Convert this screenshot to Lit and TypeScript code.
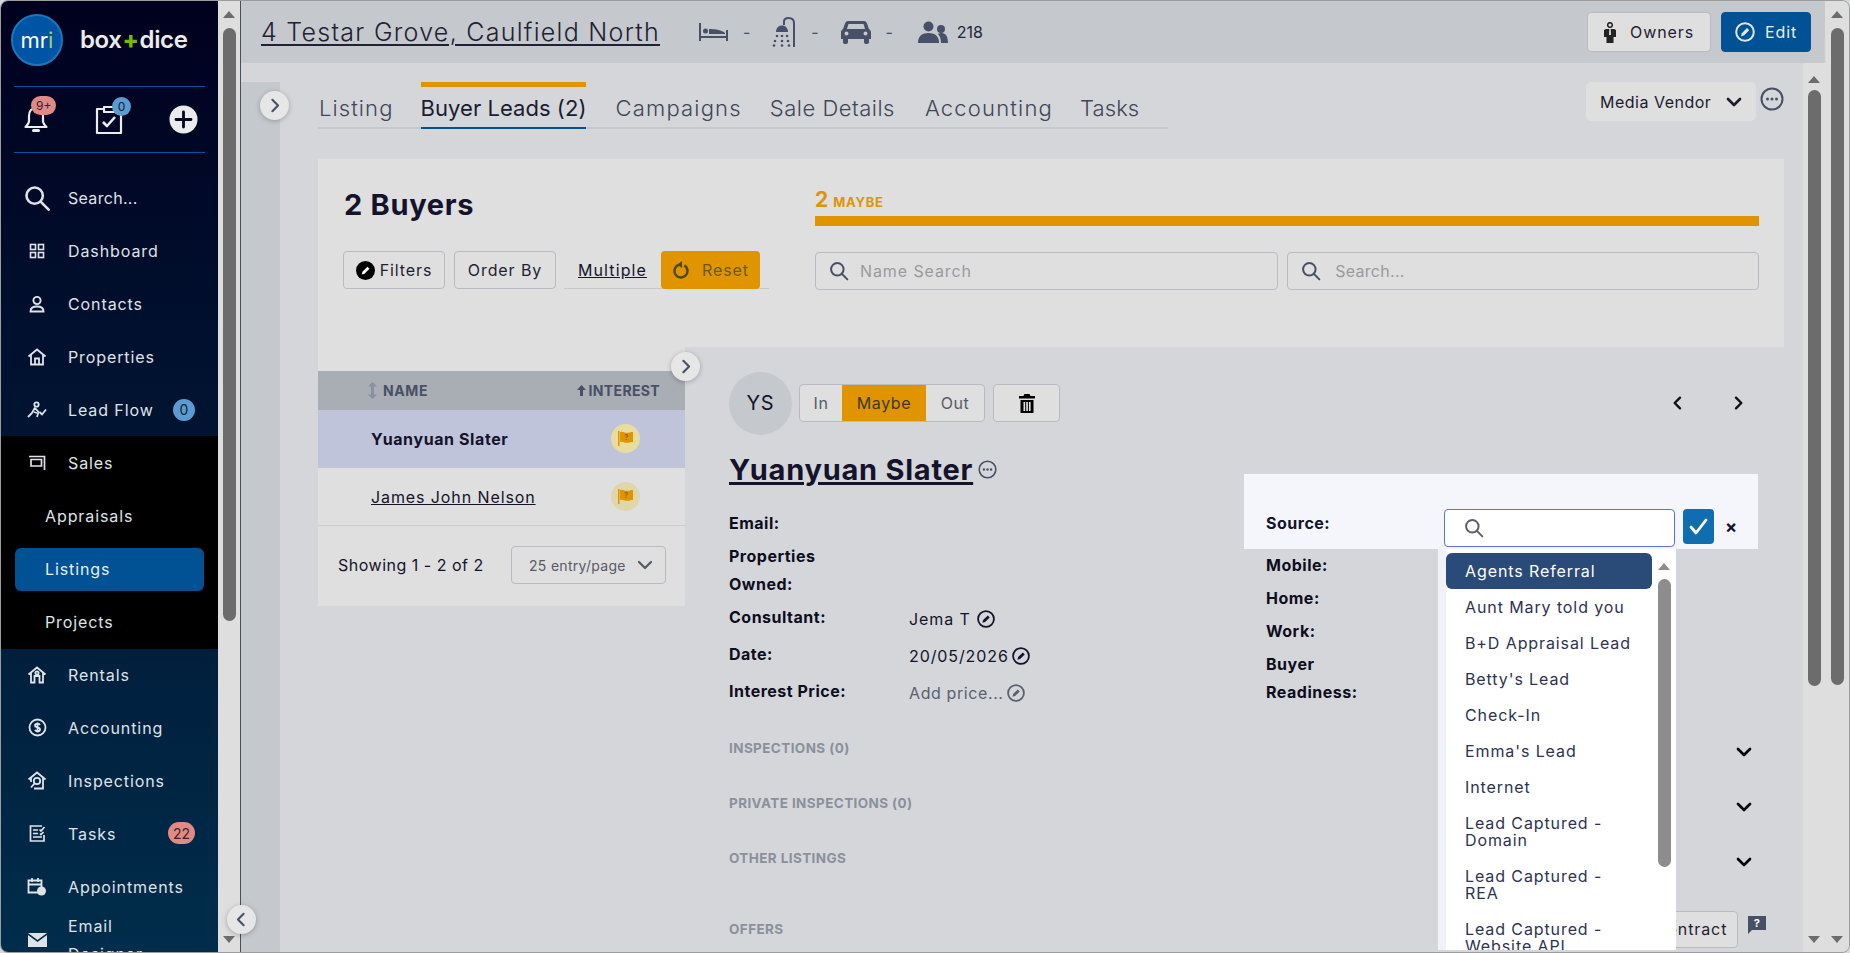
import { LitElement, html, css } from "lit";
import { customElement } from "lit/decorators.js";

const ICONS: Record<string, () => unknown> = {
  search: () => html`<svg width="28" height="28" viewBox="0 0 24 24" fill="none" stroke="currentColor" stroke-width="2.2" stroke-linecap="round"><circle cx="10" cy="10" r="7"/><path d="M15.5 15.5 22 22"/></svg>`,
  dashboard: () => html`<svg width="16" height="16" viewBox="0 0 16 16" fill="none" stroke="currentColor" stroke-width="1.6"><rect x="1.5" y="1.5" width="5" height="5"/><rect x="9.5" y="1.5" width="5" height="5"/><rect x="1.5" y="9.5" width="5" height="5"/><rect x="9.5" y="9.5" width="5" height="5"/></svg>`,
  contacts: () => html`<svg width="18" height="18" viewBox="0 0 18 18" fill="none" stroke="currentColor" stroke-width="1.9"><circle cx="9" cy="5.5" r="3.6"/><path d="M2.5 16.5c0-3.5 2.5-5 6.5-5s6.5 1.5 6.5 5z"/></svg>`,
  properties: () => html`<svg width="20" height="18" viewBox="0 0 20 18" fill="none" stroke="currentColor" stroke-width="1.8"><path d="M1.5 8.5 10 1.5l8.5 7M4 7v9.5h12V7M8 16.5v-6h4v6"/></svg>`,
  leadflow: () => html`<svg width="20" height="18" viewBox="0 0 20 18" fill="none" stroke="currentColor" stroke-width="1.8"><circle cx="9.5" cy="3.5" r="2.2"/><path d="M8 6.500 5 12l-4 4M8 7l3.500 4-1.500 5M7 11l3 1"/><path d="m12.500 11 2.500 2.500 4-5"/></svg>`,
  sales: () => html`<svg width="18" height="16" viewBox="0 0 18 16" fill="none" stroke="currentColor" stroke-width="1.7"><path d="M1 1.500h15.500V15"/><path d="M3 4.500h10.500V11H3z"/></svg>`,
  rentals: () => html`<svg width="20" height="18" viewBox="0 0 20 18" fill="none" stroke="currentColor" stroke-width="1.8"><path d="M1.500 8.500 10 1.500l8.500 7M4 7v9.500h3.500V10h5v6.500H16V7"/><circle cx="10" cy="7" r="1.6"/></svg>`,
  accounting: () => html`<svg width="19" height="19" viewBox="0 0 19 19" fill="none" stroke="currentColor" stroke-width="1.8"><circle cx="9.5" cy="9.5" r="8"/><path d="M12 7c-.5-1-1.500-1.400-2.500-1.400-1.400 0-2.500.8-2.500 1.900 0 2.600 5 1.300 5 3.900 0 1.100-1.100 1.900-2.500 1.900-1 0-2-.4-2.500-1.400M9.500 4.500v10"/></svg>`,
  inspections: () => html`<svg width="20" height="19" viewBox="0 0 20 19" fill="none" stroke="currentColor" stroke-width="1.8"><path d="M1.500 8.500 10 1.500l8.500 7M4 7v4M16 7v10.500H7"/><circle cx="10" cy="10" r="3.2"/><path d="m7.500 12.500-3.500 4"/></svg>`,
  tasks: () => html`<svg width="17" height="17" viewBox="0 0 17 17" fill="none" stroke="currentColor" stroke-width="1.7"><path d="M15 10v6H1.500V1H13M4 5h5M4 8.500h5M4 12h9"/><path d="m10.500 4.500 1.500 1.500 3.500-4M11 8.500l1 1 2.500-2.500"/></svg>`,
  appointments: () => html`<svg width="20" height="19" viewBox="0 0 20 19"><g fill="none" stroke="currentColor" stroke-width="1.8"><path d="M1.500 3.500h13v12h-13zM1.500 7.500h13M5 1v4M11 1v4"/></g><circle cx="14.500" cy="14" r="4.500" fill="currentColor"/></svg>`,
  mail: () => html`<svg width="19" height="14" viewBox="0 0 19 14"><path d="M0 0h19L9.500 7z M0 2v12h19V2l-9.500 7z" fill="currentColor"/></svg>`,
  bell: () => html`<svg width="26" height="29" viewBox="0 0 26 29" fill="none" stroke="currentColor" stroke-width="2.2" stroke-linejoin="round"><path d="M13 3c-4.500 0-7 3.500-7 8v5c0 2.500-1.500 4-3.500 6h21c-2-2-3.500-3.500-3.500-6v-5c0-4.500-2.500-8-7-8z"/><path d="M10.500 25.500h5" stroke-width="3" stroke-linecap="round"/></svg>`,
  clipboard: () => html`<svg width="28" height="30" viewBox="0 0 28 30" fill="none" stroke="currentColor" stroke-width="2.2" stroke-linejoin="round"><path d="M9 4H2v24h24V4h-7"/><path d="M9 2h10v5H9z"/><path d="m8 17 4 4 8-9" stroke-width="2.6"/></svg>`,
  plus: () => html`<svg width="29" height="29" viewBox="0 0 29 29"><circle cx="14.500" cy="14.500" r="14" fill="#ebebeb"/><path d="M14.500 7v15M7 14.500h15" stroke="#000020" stroke-width="2.8" stroke-linecap="round"/></svg>`,
  bed: () => html`<svg width="29" height="20" viewBox="0 0 29 20" fill="none" stroke="#475066" stroke-width="2"><path d="M1 1v18M28 8v11M1 15h27"/><circle cx="6.500" cy="9" r="2.500" fill="#475066" stroke="none"/><path d="M10 12V7c5 0 12 .5 16 4v1z" fill="#475066" stroke="none"/></svg>`,
  shower: () => html`<svg width="24" height="30" viewBox="0 0 24 30"><path d="M12 8V4.500C12 2 14 1 16.500 1 20 1 22 3 22 6v24" fill="none" stroke="#475066" stroke-width="2"/><path d="M4 15h12c0-4-2.500-6.500-6-6.500S4 11 4 15z" fill="#475066"/><g fill="#475066"><circle cx="5" cy="19" r="1.3"/><circle cx="10" cy="19" r="1.3"/><circle cx="15" cy="19" r="1.3"/><circle cx="3" cy="24" r="1.3"/><circle cx="10" cy="24" r="1.3"/><circle cx="16" cy="24" r="1.3"/><circle cx="2" cy="28.500" r="1.3"/><circle cx="10" cy="28.500" r="1.3"/><circle cx="17" cy="28.500" r="1.3"/></g></svg>`,
  car: () => html`<svg width="30" height="24" viewBox="0 0 30 24"><path fill-rule="evenodd" fill="#475066" d="M7 1h16c1.500 0 2.500 1 3 2.500L28 9c1.300.8 2 2 2 3.500V19h-2v3c0 1-.8 2-2 2h-1c-1.200 0-2-1-2-2v-3H7v3c0 1-.8 2-2 2H4c-1.200 0-2-1-2-2v-3H0v-6.500C0 11 .7 9.800 2 9l2-5.500C4.500 2 5.500 1 7 1zm.5 3L6 9h18l-1.500-5zM5.500 11.500a2 2 0 1 0 0 4 2 2 0 0 0 0-4zm19 0a2 2 0 1 0 0 4 2 2 0 0 0 0-4z"/></svg>`,
  people: () => html`<svg class="people" width="30" height="22" viewBox="0 0 30 22" fill="#475066"><circle cx="10.500" cy="5.500" r="5"/><path d="M0 22c0-6 3-10 10.500-10S21 16 21 22z"/><circle cx="23" cy="8" r="4"/><path d="M20 13c1-.6 2-1 3.500-1 4.500 0 6.500 4 6.500 10h-7c0-4-1-7-3-9z"/></svg>`,
  owner: () => html`<svg width="12" height="21" viewBox="0 0 12 21" fill="#222"><circle cx="6" cy="3" r="2.3" fill="none" stroke="#222" stroke-width="1.5"/><path d="M2 7h8l2 1v7H9.500v6h-7v-6H0V8z"/><path d="M5.300 7h1.400l.3 6H5z" fill="#ddd"/></svg>`,
  trash: () => html`<svg width="16" height="19" viewBox="0 0 16 19" fill="#000"><path d="M5.500 0h5l1 2H16v2.500H0V2h4.500z"/><path fill-rule="evenodd" d="M1.500 6h13v13h-13zM4.500 8v9h1.700V8zM7.200 8v9h1.700V8zM9.900 8v9h1.700V8z"/></svg>`,
  check: () => html`<svg width="19" height="17" viewBox="0 0 19 17" fill="none" stroke="#fff" stroke-width="2.8" stroke-linecap="round" stroke-linejoin="round"><path d="m2 9 5 6L17 2"/></svg>`,
  help: () => html`<svg width="18" height="18" viewBox="0 0 18 18"><path d="M0 0h18v14H4l-4 4z" fill="#475066"/><text x="9" y="11" font-size="11" font-weight="700" text-anchor="middle" fill="#fff" font-family="Inter, sans-serif">?</text></svg>`,
  reset: () => html`<svg width="18" height="19" viewBox="0 0 18 19" fill="none" stroke="#4f4a1c" stroke-width="2.4"><path d="M12.250 5.370A6.500 6.500 0 1 1 7.870 4.600"/><path d="M10 1v7L5.500 4.500z" fill="#4f4a1c" stroke="none"/></svg>`,
};

const chevron = (dir: "up" | "down" | "left" | "right", size = 16, w = 2.4) => {
  const d = { down: "M4 8l8 8 8-8", up: "M4 16l8-8 8 8", left: "M15 4l-8 8 8 8", right: "M9 4l8 8-8 8" }[dir];
  return html`<svg width=${size} height=${size} viewBox="0 0 24 24" fill="none" stroke="currentColor" stroke-width=${w * 1.5} stroke-linecap="round" stroke-linejoin="round"><path d=${d}/></svg>`;
};

// circle with a pencil; filled variant is the black Filters one
const pencil = (size = 18, color = "currentColor", filled = false) => html`<svg width=${size} height=${size} viewBox="0 0 20 20">
  <circle cx="10" cy="10" r=${filled ? 10 : 8.8} fill=${filled ? color : "none"} stroke=${color} stroke-width=${filled ? 0 : 2}/>
  <path d="M6 14.200l.8-3 5.200-5.200 2.200 2.200-5.200 5.200z" fill=${filled ? "#fff" : color}/>
</svg>`;

const dots = (size = 24) => html`<svg width=${size} height=${size} viewBox="0 0 24 24" fill="none" stroke="#475066" stroke-width="2"><circle cx="12" cy="12" r="10.500"/><circle cx="7.500" cy="12" r="1.500" fill="#475066" stroke="none"/><circle cx="12" cy="12" r="1.500" fill="#475066" stroke="none"/><circle cx="16.500" cy="12" r="1.500" fill="#475066" stroke="none"/></svg>`;

const lens = (size = 20, color = "#475066") => html`<svg width=${size} height=${size} viewBox="0 0 24 24" fill="none" stroke=${color} stroke-width="2.4" stroke-linecap="round"><circle cx="10" cy="10" r="7.500"/><path d="M15.500 15.500 22 22"/></svg>`;

const flag = () => html`<span class="flag"><svg width="15" height="15" viewBox="0 0 15 15"><path d="M0 0h1.500v15H0z" fill="#e09400"/><path d="M2 1c3-1 4 .8 6.500.8S12.500 1 15 1v10c-2.500 0-3.500.8-6.500.8S5 10 2 11z" fill="#e09400"/><text x="8.500" y="8.500" font-size="7" font-weight="700" text-anchor="middle" fill="#8a6a10" font-family="Inter, sans-serif">?</text></svg></span>`;

const TOP_NAV = [
  ["dashboard", "Dashboard"],
  ["contacts", "Contacts"],
  ["properties", "Properties"],
];
const LOWER_NAV = [
  ["rentals", "Rentals"],
  ["accounting", "Accounting"],
  ["inspections", "Inspections"],
];
const SOURCES = ["Aunt Mary told you", "B+D Appraisal Lead", "Betty's Lead", "Check-In", "Emma's Lead", "Internet", "Lead Captured - Domain", "Lead Captured - REA", "Lead Captured - Website API"];

@customElement("app-root")
export class AppRoot extends LitElement {
  static styles = css`
    :host {
      display: block;
      width: 1850px;
      height: 953px;
      overflow: hidden;
      font-family: Inter, "Liberation Sans", sans-serif;
      font-size: 16px;
      letter-spacing: 0.9px;
      color: #14132b;
      background: #d5d6da;
    }
    * { box-sizing: border-box; }
    svg { display: block; flex: none; }
    a { color: inherit; }
    .window {
      display: flex;
      height: 953px;
      border: 1px solid #9c9c9c;
      border-radius: 8px;
      overflow: hidden;
      position: relative;
    }

    /* sidebar */
    .sidebar {
      width: 217px;
      flex: none;
      background: linear-gradient(#00001e, #002d4b);
      color: #dfe3e8;
      overflow: hidden;
    }
    .logo { display: flex; align-items: center; height: 85px; padding: 0 0 8px 10px; }
    .mri {
      width: 52px; height: 52px; border-radius: 50%;
      background: #0054a6; border: 2px solid #1a78b8;
      color: #fff; display: flex; align-items: center; justify-content: center;
      font-size: 22px; font-weight: 400; letter-spacing: 0;
    }
    .mri b { font-weight: 400; color: #a8d05a; }
    .brand { margin-left: 17px; color: #ececec; font-size: 24px; font-weight: 600; letter-spacing: -0.4px; }
    .brand i { font-style: normal; color: #7ab800; font-weight: 800; padding: 0 1px; }
    .quick {
      margin: 0 13px; height: 67px;
      border-top: 1px solid #0054a6; border-bottom: 1px solid #0054a6;
      position: relative; display: flex; align-items: center; justify-content: space-between;
      padding: 0 0 0 9px; color: #ececec;
    }
    .quick-item { position: relative; }
    .quick-item.add { margin-right: 7px; }
    .pill {
      position: absolute; left: 8px; top: -9px; font-size: 12px; color: #3c2030; letter-spacing: 0;
      background: #e08a85; border-radius: 10px; height: 19px; min-width: 19px; padding: 0 5px;
      display: flex; align-items: center; justify-content: center;
    }
    .pill.blue { left: 17px; top: -8px; background: #5a9bd4; color: #123; padding: 0; }
    .nav { padding-top: 19px; }
    .item {
      height: 52.9px; display: flex; align-items: center; padding-left: 14px;
      position: relative; color: #dfe3e8;
    }
    .item.find { letter-spacing: 0.3px; }
    .ico { width: 44px; flex: none; display: flex; justify-content: center; margin-right: 9px; }
    .item .count {
      position: absolute; right: 23px; top: 15px; height: 22px; min-width: 22px;
      border-radius: 11px; display: flex; align-items: center; justify-content: center;
      font-size: 14px; letter-spacing: 0; color: #123; background: #5a9bd4; padding: 0 5px;
    }
    .item .count.red { background: #e08a85; color: #402030; right: 23px; }
    .sales { background: #000; padding-top: 0.5px; }
    .sub { padding-left: 44px; }
    .sub.on {
      height: 43px; margin: 5px 14px; padding-left: 30px;
      background: #005295; border-radius: 6px; color: #e8eef4;
    }
    .two { line-height: 28px; }

    /* scrollbars */
    .scroll {
      flex: none; width: 22px; background: #dedede; position: relative;
      display: flex; flex-direction: column; align-items: center;
    }
    .arrow { width: 0; height: 0; border-left: 6px solid transparent; border-right: 6px solid transparent; }
    .arrow.up { border-bottom: 7px solid #6c6c6c; margin-top: 10px; }
    .arrow.down { border-top: 7px solid #6c6c6c; position: absolute; bottom: 9px; }
    .thumb { width: 13px; background: #6c6c6c; border-radius: 7px; margin-top: 10px; }
    .thumb.a { height: 593px; }
    .thumb.b { height: 596px; margin-top: 7px; }
    .thumb.c { height: 657px; }
    .arrow.inner { margin-top: 13px; }
    .scroll.outer { width: 24px; }

    .divider { width: 1px; background: #46505e; flex: none; }

    /* main */
    .main { flex: 1; min-width: 0; display: flex; flex-direction: column; }
    .head {
      height: 62px; flex: none; background: #c5c8cd;
      display: flex; align-items: center; padding: 0 14px 0 20px;
    }
    .title { font-size: 25px; font-weight: 300; letter-spacing: 1.27px; color: #1f2233; text-decoration: underline; text-decoration-thickness: 2px; text-underline-offset: 3px; }
    .specs { display: flex; align-items: center; margin-left: 39px; color: #475066; }
    .dash { margin: 0 21px 0 15px; }
    .people { margin-left: 3px; }
    .nbr { font-size: 16px; margin-left: 9px; letter-spacing: 0; color: #22263a; }
    .spacer { flex: 1; }
    .btn {
      height: 40px; display: inline-flex; align-items: center; justify-content: center;
      background: #dfdfdf; border: 1px solid #b9bbc0; border-radius: 4px; color: #1f2233;
    }
    .owners { width: 124px; gap: 14px; }
    .edit { width: 90px; margin-left: 10px; background: #005295; border-color: #005295; color: #e8eef4; gap: 10px; }
    .body { flex: 1; display: flex; min-height: 0; }
    .strip { width: 39px; flex: none; margin-top: 19px; background: #c5c8cd; }
    .page { flex: 1; min-width: 0; padding: 19px 19px 0 38px; }
    .tabs-row { display: flex; height: 46px; margin-bottom: 31px; }
    .tabs { display: flex; width: 850px; height: 47px; border-bottom: 2px solid #c5c8cd; padding-left: 1px; gap: 27px; }
    .tab { font-size: 22px; font-weight: 300; letter-spacing: 0.8px; color: #3f4658; height: 47px; padding-top: 13px; }
    .tab:nth-child(1) { letter-spacing: 1.1px; }
    .tab:nth-child(3) { letter-spacing: 1.2px; margin-left: 2px; }
    .tab:nth-child(4) { letter-spacing: 0.5px; margin-left: 1px; }
    .tab:nth-child(5) { letter-spacing: 1.2px; margin-left: 3px; }
    .tab:nth-child(6) { letter-spacing: 0.1px; }
    .tab.on { border-top: 5px solid #e09400; border-bottom: 2px solid #005295; padding-top: 8px; color: #1a1c30; font-weight: 400; letter-spacing: 0.05px; }
    .media {
      width: 170px; height: 39px; background: #dfdfdf; border-radius: 5px;
      display: flex; align-items: center; justify-content: space-between; padding: 0 13px 0 14px; color: #1a1c30; letter-spacing: 0.5px;
    }
    .more { margin: 5px 0 0 4px; }

    .filters { height: 188px; background: #dfdfdf; display: flex; padding: 0 25px 0 26px; }
    .f-left { width: 471px; flex: none; padding-top: 29px; }
    .f-left h2 { margin: 0 0 29px; font-size: 29px; line-height: 34px; font-weight: 700; letter-spacing: 0.7px; }
    .f-btns { display: flex; align-items: flex-start; margin-left: -1px; }
    .f-btn { height: 38px; width: 102px; gap: 5px; }
    .f-btn + .f-btn { margin-left: 9px; }
    .multi { display: flex; margin-left: 8px; border-bottom: 1px solid #c8c8cc; width: 205px; height: 38px; padding-left: 14px; align-items: center; }
    .multi u { letter-spacing: 1.1px; }
    .reset {
      margin-left: 14px; width: 99px; height: 38px; background: #e09400; border-radius: 4px;
      display: flex; align-items: center; gap: 12px; padding-left: 11px; color: #6b5a10;
    }
    .f-right { flex: 1; padding-top: 29px; }
    .tally { color: #e09400; font-weight: 700; height: 28px; line-height: 24px; display: flex; align-items: baseline; gap: 5px; font-size: 21px; letter-spacing: 0; }
    .tally small { font-size: 13px; letter-spacing: 0.7px; }
    .bar { height: 10px; background: #e09400; }
    .inputs { display: flex; gap: 9px; margin-top: 26px; }
    .inp {
      height: 38px; border: 1px solid #b9bbc0; border-radius: 4px;
      display: flex; align-items: center; padding-left: 13px; gap: 11px; color: #9a9a9e; flex: 463;
    }
    .inp + .inp { flex: 472; gap: 14px; letter-spacing: 0.3px; }

    .lower { display: flex; }
    .table { width: 367px; height: 259px; flex: none; background: #dfdfdf; padding-top: 24px; }
    .thead {
      height: 39px; background: #a9adb4; display: flex; align-items: center;
      font-size: 14px; font-weight: 700; color: #475066; letter-spacing: 0.6px;
    }
    .sort { margin-left: 50px; color: #8a90a0; margin-right: 6px; }
    .int-ico { margin-left: auto; }
    .thead .int { margin: 0 25px 0 3px; letter-spacing: 0.35px; }
    .tr { height: 58px; display: flex; align-items: center; padding-left: 53px; border-bottom: 1px solid #cdcdd0; }
    .tr.on { background: #c0c4da; font-weight: 700; border-bottom: 0; letter-spacing: 0.6px; padding-bottom: 1px; }
    .flag { margin-left: auto; margin-right: 45px; width: 29px; height: 29px; border-radius: 50%; background: #e8dc9f; display: flex; align-items: center; justify-content: center; }
    .tr:not(.on) .flag { background: #dfd7aa; }
    .tfoot { display: flex; align-items: center; padding: 20px 19px 0 20px; letter-spacing: 0.5px; }
    .per {
      margin-left: auto; width: 155px; height: 38px; border: 1px solid #b9bbc0; border-radius: 4px;
      display: flex; align-items: center; justify-content: space-between; padding: 0 11px 0 17px;
      font-size: 14px; color: #555b68; letter-spacing: 0.3px;
    }

    .detail { flex: 1; padding: 24px 26px 0 44px; min-width: 0; }
    .who { display: flex; align-items: center; height: 64px; }
    .avatar { width: 63px; height: 63px; border-radius: 50%; background: #c5c8cd; display: flex; align-items: center; justify-content: center; font-size: 20px; margin-right: 7px; }
    .seg { display: flex; height: 38px; background: #dfdfdf; border: 1px solid #b9bbc0; border-radius: 4px; width: 186px; overflow: hidden; color: #555b68; letter-spacing: 0.6px; }
    .seg span { display: flex; align-items: center; justify-content: center; }
    .seg .a { width: 42px; }
    .seg .b { width: 84px; background: #e09400; color: #3a3a20; }
    .seg .c { flex: 1; }
    .bin { margin-left: 8px; width: 67px; height: 38px; }
    .pager { margin-left: auto; display: flex; gap: 44px; margin-right: 12px; color: #111; }
    .name-row { display: flex; align-items: center; height: 39px; margin-top: 15px; gap: 5px; }
    .name { font-size: 29px; font-weight: 700; letter-spacing: 0.75px; text-decoration-thickness: 3px; text-underline-offset: 2px; }
    .cols { display: flex; align-items: flex-start; margin-top: -15px; }
    .col-l { width: 515px; flex: none; padding-top: 35px; }
    .col-r { flex: 1; min-width: 0; position: relative; }
    .row { display: grid; grid-template-columns: 180px 1fr; line-height: 28px; margin-bottom: 5px; }
    .row.tall { margin-bottom: 7px; }
    .row b, .rows b { font-weight: 700; color: #0d0d20; display: block; letter-spacing: 0.5px; }
    .row b { max-width: 150px; }
    .val { display: flex; align-items: center; gap: 6px; height: 28px; margin-top: 2px; }
    .val.tight { gap: 3px; }
    .val.add { color: #5a6070; gap: 3px; letter-spacing: 0.6px; }
    .hi { height: 75px; background: #f4f6fb; padding: 35px 0 0 22px; display: flex; }
    .hi b { width: 178px; line-height: 28px; font-weight: 700; flex: none; letter-spacing: 0.5px; }
    .srch { width: 231px; height: 38px; background: #fff; border: 1px solid #5b72e8; border-radius: 4px; padding-left: 19px; display: flex; align-items: center; }
    .ok { width: 31px; height: 35px; margin-left: 8px; background: #0f6db0; border-radius: 4px; display: flex; align-items: center; justify-content: center; }
    .x { margin-left: 11px; line-height: 36px; font-weight: 700; font-size: 18px; }
    .rows { padding: 2px 0 0 22px; line-height: 28px; display: flex; flex-direction: column; gap: 5px; }

    .drop {
      position: absolute; top: 75px; left: 194px; width: 238px; height: 401px;
      background: #f0f2f7; padding: 4px 0 0 8px; overflow: hidden;
      display: flex; z-index: 2;
    }
    .drop-in { background: #fff; display: flex; flex: 1; margin-top: -4px; padding-top: 4px; }
    .opts { width: 206px; flex: none; color: #2e3350; line-height: 17px; }
    .opt { padding: 9.5px 14px 9.5px 19px; }
    .opt.on { background: #2a4a78; color: #fff; border-radius: 6px; }
    .drop-bar { flex: 1; display: flex; flex-direction: column; align-items: center; }
    .drop-bar .arrow.up { border-bottom-color: #8d8d8d; margin-top: 10px; }
    .drop-bar .thumb { background: #8d8d8d; height: 288px; margin-top: 9px; }

    .sec { display: flex; height: 55px; padding-top: 20px; font-size: 13.5px; font-weight: 700; color: #8a909c; letter-spacing: 0.4px; line-height: 17px; padding-right: 5px; }
    .secs { margin-top: 8px; }
    .sec .spacer + svg { color: #000; margin-top: 3px; }
    .sec.offers { height: auto; padding-top: 0; margin-top: 26px; align-items: center; padding-right: 0; }
    .contract { width: 94px; height: 37px; margin-right: 10px; }
    .sec.offers .contract { font-weight: 400; font-size: 16px; letter-spacing: 0.9px; }
    .help { margin-right: -8px; margin-top: -9px; }

    .round {
      position: absolute; width: 29px; height: 29px; border-radius: 50%; background: #e6e6e6;
      box-shadow: 0 1px 5px rgba(0, 0, 0, 0.25); display: flex; align-items: center; justify-content: center;
      color: #475066; z-index: 3;
    }
    .r1 { left: 259px; top: 90px; }
    .r2 { left: 670px; top: 351px; }
    .r3 { left: 226px; top: 904px; }
  `;

  render() {
    return html`
      <div class="window">
        <aside class="sidebar">
          <div class="logo">
            <div class="mri">mr<b>i</b></div>
            <div class="brand">box<i>+</i>dice</div>
          </div>
          <div class="quick">
            <div class="quick-item">${ICONS.bell()}<span class="pill">9+</span></div>
            <div class="quick-item">${ICONS.clipboard()}<span class="pill blue">0</span></div>
            <div class="quick-item add">${ICONS.plus()}</div>
          </div>
          <div class="nav">
            <div class="item find"><span class="ico">${ICONS.search()}</span>Search...</div>
            ${TOP_NAV.map(([ic, label]) => html`<div class="item"><span class="ico">${ICONS[ic]()}</span>${label}</div>`)}
            <div class="item"><span class="ico">${ICONS.leadflow()}</span>Lead Flow<span class="count">0</span></div>
            <div class="sales">
              <div class="item"><span class="ico">${ICONS.sales()}</span>Sales</div>
              <div class="item sub">Appraisals</div>
              <div class="item sub on">Listings</div>
              <div class="item sub">Projects</div>
            </div>
            ${LOWER_NAV.map(([ic, label]) => html`<div class="item"><span class="ico">${ICONS[ic]()}</span>${label}</div>`)}
            <div class="item"><span class="ico">${ICONS.tasks()}</span>Tasks<span class="count red">22</span></div>
            <div class="item"><span class="ico">${ICONS.appointments()}</span>Appointments</div>
            <div class="item two"><span class="ico">${ICONS.mail()}</span><span>Email<br />Designer</span></div>
          </div>
        </aside>
        <div class="scroll"><i class="arrow up"></i><div class="thumb a"></div><i class="arrow down"></i></div>
        <div class="divider"></div>
        <div class="main">
          <header class="head">
            <a class="title">4 Testar Grove, Caulfield North</a>
            <div class="specs">
              ${ICONS.bed()}<span class="dash">-</span>
              ${ICONS.shower()}<span class="dash">-</span>
              ${ICONS.car()}<span class="dash">-</span>
              ${ICONS.people()}<span class="nbr">218</span>
            </div>
            <div class="spacer"></div>
            <div class="btn owners">${ICONS.owner()}Owners</div>
            <div class="btn edit">${pencil(20, "#dce8f2")}Edit</div>
          </header>
          <div class="body">
            <div class="strip"></div>
            <div class="page">
              <div class="tabs-row">
                <nav class="tabs">
                  <span class="tab">Listing</span>
                  <span class="tab on">Buyer Leads (2)</span>
                  <span class="tab">Campaigns</span>
                  <span class="tab">Sale Details</span>
                  <span class="tab">Accounting</span>
                  <span class="tab">Tasks</span>
                </nav>
                <div class="spacer"></div>
                <div class="media">Media Vendor ${chevron("down", 18)}</div>
                <div class="more">${dots(24)}</div>
              </div>

              <section class="filters">
                <div class="f-left">
                  <h2>2 Buyers</h2>
                  <div class="f-btns">
                    <div class="btn f-btn">${pencil(19, "#000", true)}Filters</div>
                    <div class="btn f-btn">Order By</div>
                    <div class="multi"><u>Multiple</u><div class="reset">${ICONS.reset()}Reset</div></div>
                  </div>
                </div>
                <div class="f-right">
                  <div class="tally">2 <small>MAYBE</small></div>
                  <div class="bar"></div>
                  <div class="inputs">
                    <div class="inp">${lens()}Name Search</div>
                    <div class="inp">${lens()}Search...</div>
                  </div>
                </div>
              </section>

              <div class="lower">
                <section class="table">
                  <div class="thead">
                    <span class="sort"><svg width="9" height="17" viewBox="0 0 9 17" fill="currentColor"><path d="M4.500 0 9 4.500H6v8h3L4.500 17 0 12.500h3v-8H0z"/></svg></span>
                    NAME
                    <span class="int-ico"><svg width="9" height="11" viewBox="0 0 9 11" fill="#475066"><path d="M4.500 0 9 5H6v6H3V5H0z"/></svg></span>
                    <span class="int">INTEREST</span>
                  </div>
                  <div class="tr on">Yuanyuan Slater${flag()}</div>
                  <div class="tr"><u>James John Nelson</u>${flag()}</div>
                  <div class="tfoot">Showing 1 - 2 of 2 <div class="per">25 entry/page ${chevron("down", 18, 2)}</div></div>
                </section>

                <section class="detail">
                  <div class="who">
                    <div class="avatar">YS</div>
                    <div class="seg"><span class="a">In</span><span class="b">Maybe</span><span class="c">Out</span></div>
                    <div class="btn bin">${ICONS.trash()}</div>
                    <div class="pager">${chevron("left", 16)}${chevron("right", 16)}</div>
                  </div>
                  <div class="name-row"><u class="name">Yuanyuan Slater</u>${dots(19)}</div>
                  <div class="cols">
                    <div class="col-l">
                      <div class="row"><b>Email:</b><span></span></div>
                      <div class="row"><b>Properties Owned:</b><span></span></div>
                      <div class="row tall"><b>Consultant:</b><span class="val">Jema T ${pencil(18, "#14132b")}</span></div>
                      <div class="row tall"><b>Date:</b><span class="val tight">20/05/2026 ${pencil(18, "#14132b")}</span></div>
                      <div class="row"><b>Interest Price:</b><span class="val add">Add price... ${pencil(18, "#5a6070")}</span></div>
                    </div>
                    <div class="col-r">
                      <div class="hi">
                        <b>Source:</b>
                        <div class="srch">${lens(20, "#5a6070")}</div>
                        <div class="ok">${ICONS.check()}</div>
                        <span class="x">×</span>
                      </div>
                      <div class="rows">
                        <b>Mobile:</b>
                        <b>Home:</b>
                        <b>Work:</b>
                        <b>Buyer<br />Readiness:</b>
                      </div>
                      <div class="drop">
                        <div class="drop-in">
                          <div class="opts">
                            <div class="opt on">Agents Referral</div>
                            ${SOURCES.map((s) => html`<div class="opt">${s}</div>`)}
                          </div>
                          <div class="drop-bar"><i class="arrow up"></i><div class="thumb"></div></div>
                        </div>
                      </div>
                    </div>
                  </div>
                  <div class="secs">
                    <div class="sec">INSPECTIONS (0)<div class="spacer"></div>${chevron("down", 18)}</div>
                    <div class="sec">PRIVATE INSPECTIONS (0)<div class="spacer"></div>${chevron("down", 18)}</div>
                    <div class="sec">OTHER LISTINGS<div class="spacer"></div>${chevron("down", 18)}</div>
                    <div class="sec offers">OFFERS<div class="spacer"></div><div class="btn contract">Contract</div><span class="help">${ICONS.help()}</span></div>
                  </div>
                </section>
              </div>
            </div>
            <div class="scroll"><i class="arrow up inner"></i><div class="thumb b"></div><i class="arrow down"></i></div>
          </div>
        </div>
        <div class="scroll outer"><i class="arrow up"></i><div class="thumb c"></div><i class="arrow down"></i></div>

        <div class="round r1">${chevron("right", 17, 2)}</div>
        <div class="round r2">${chevron("right", 17, 2)}</div>
        <div class="round r3">${chevron("left", 17, 2)}</div>
      </div>
    `;
  }
}
